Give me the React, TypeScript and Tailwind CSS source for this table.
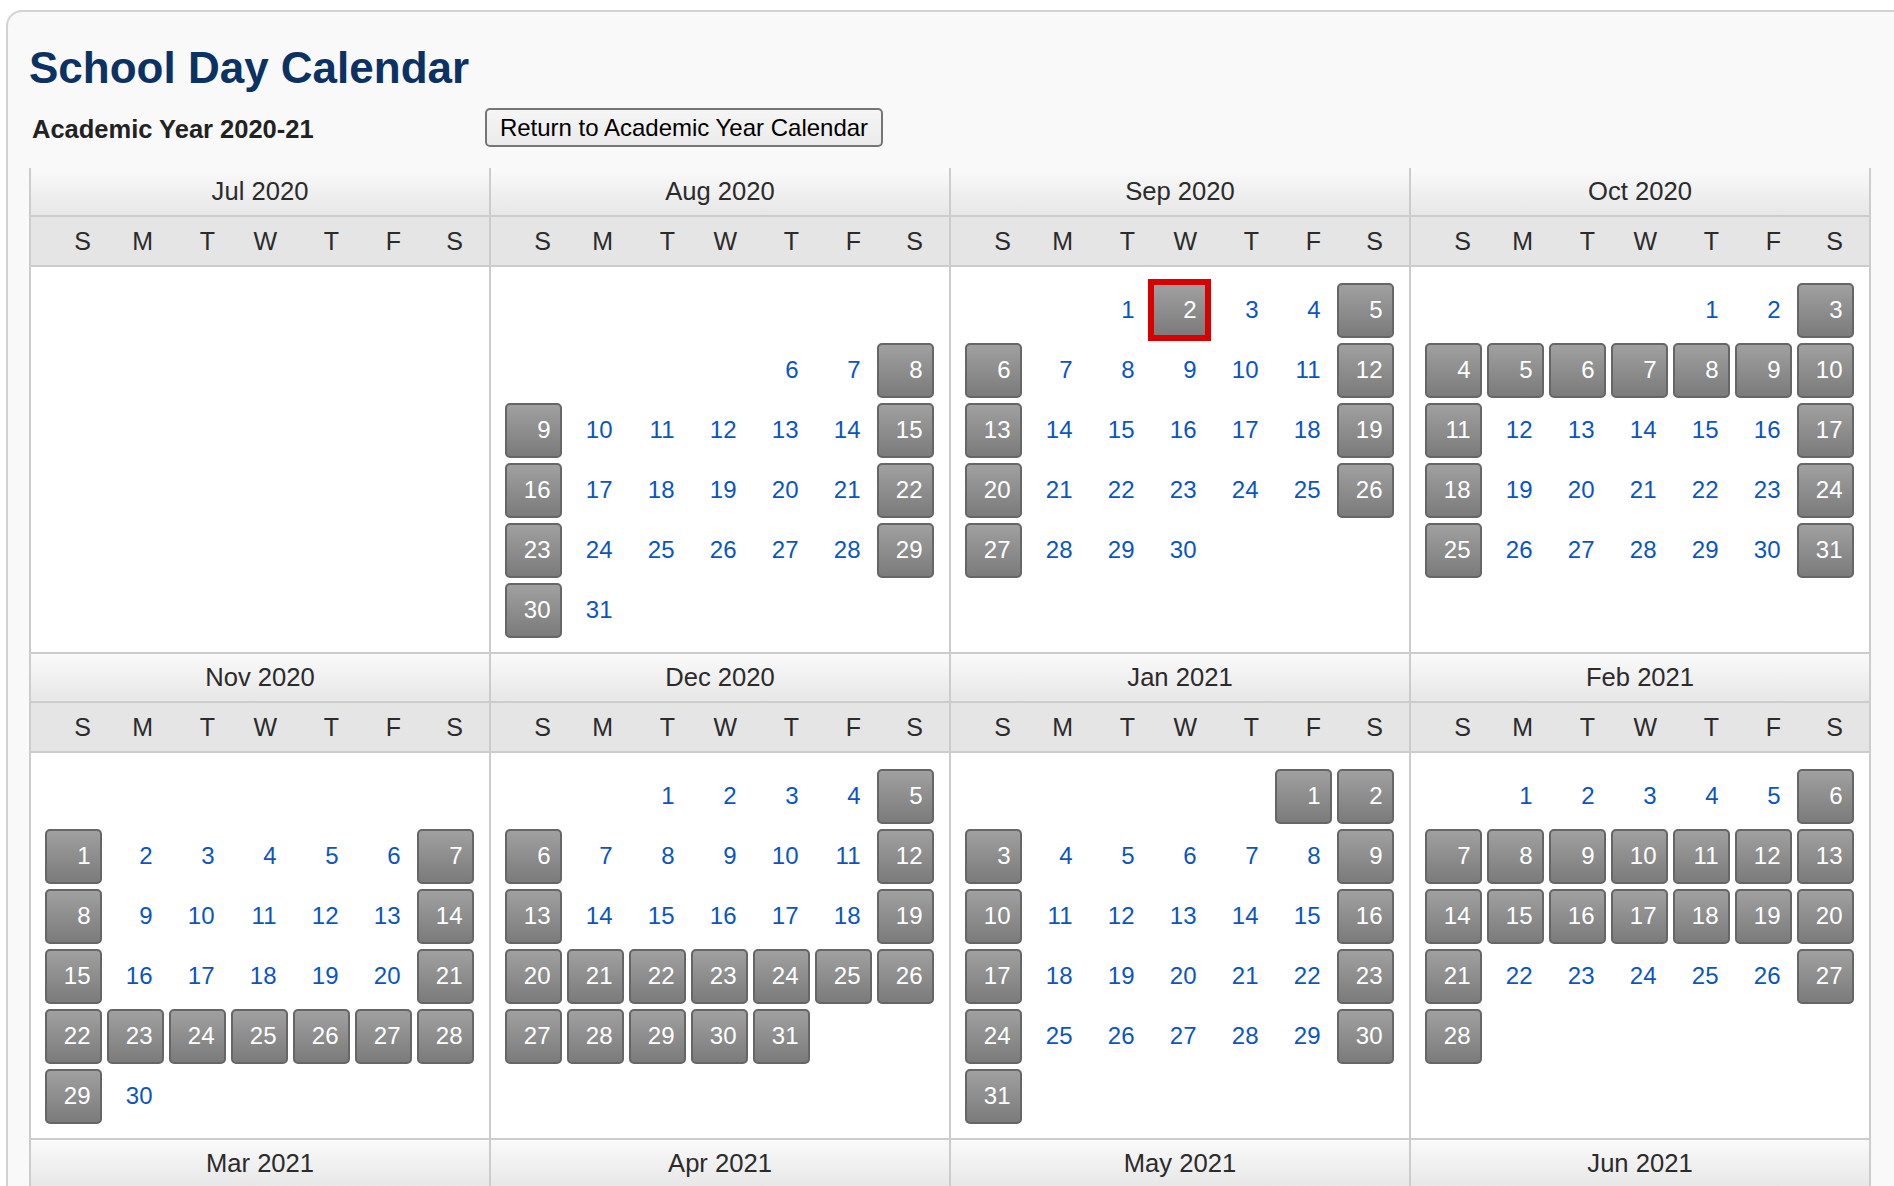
import React from 'react';

type MonthData = {
  name: string;
  y: number;
  m: number;
  start?: number;
  hideAll?: boolean;
  off: number[];
  selected?: number;
};

const MONTHS: MonthData[][] = [
  [
    { name: 'Jul 2020', y: 2020, m: 6, hideAll: true, off: [] },
    { name: 'Aug 2020', y: 2020, m: 7, start: 6, off: [] },
    { name: 'Sep 2020', y: 2020, m: 8, off: [], selected: 2 },
    { name: 'Oct 2020', y: 2020, m: 9, off: [5, 6, 7, 8, 9] },
  ],
  [
    { name: 'Nov 2020', y: 2020, m: 10, off: [23, 24, 25, 26, 27] },
    { name: 'Dec 2020', y: 2020, m: 11, off: [21, 22, 23, 24, 25, 28, 29, 30, 31] },
    { name: 'Jan 2021', y: 2021, m: 0, off: [1] },
    { name: 'Feb 2021', y: 2021, m: 1, off: [8, 9, 10, 11, 12, 15, 16, 17, 18, 19] },
  ],
];

// only the month titles of the third row fit in the window
const NEXT_ROW = ['Mar 2021', 'Apr 2021', 'May 2021', 'Jun 2021'];

const WEEKDAYS = ['S', 'M', 'T', 'W', 'T', 'F', 'S'];

function DayCell({ month, day }: { month: MonthData; day: number }) {
  const total = new Date(month.y, month.m + 1, 0).getDate();
  if (month.hideAll || day < 1 || day > total || day < (month.start ?? 1)) {
    return <div />;
  }
  const dow = new Date(month.y, month.m, day).getDay();
  const isOff = dow === 0 || dow === 6 || month.off.includes(day);

  if (month.selected === day) {
    return (
      <div className="flex items-center justify-center">
        <div className="w-[63px] h-[62px] shrink-0 border-[6px] border-[#d90000] bg-linear-to-b from-[#a0a0a0] to-[#7b7b7b] flex items-center justify-end pr-[8px] text-white">
          {day}
        </div>
      </div>
    );
  }

  return (
    <div className="flex items-center justify-center">
      {isOff ? (
        <div className="w-[57px] h-[55px] shrink-0 rounded-[5px] border-2 border-[#666666] bg-linear-to-b from-[#a0a0a0] to-[#7b7b7b] flex items-center justify-end pr-[9px] text-white">
          {day}
        </div>
      ) : (
        <div className="w-[57px] h-[55px] shrink-0 border-2 border-transparent flex items-center justify-end pr-[9px] text-[#0b55c0]">
          {day}
        </div>
      )}
    </div>
  );
}

function MonthTitle({ name }: { name: string }) {
  return (
    <div className="h-[49px] border-b-2 border-[#cccccc] bg-linear-to-b from-[#fafafa] to-[#e7e7e7] text-center text-[25.6px] leading-[47px] text-[#2b2b2b]">
      {name}
    </div>
  );
}

function Month({ month, last }: { month: MonthData; last: boolean }) {
  const first = new Date(month.y, month.m, 1).getDay();
  const offset = first === 0 ? 7 : first;
  const cells = Array.from({ length: 42 }, (_, i) => i - offset + 1);

  return (
    <div className={last ? 'w-[462px] border-x-2 border-[#cccccc]' : 'w-[460px] border-l-2 border-[#cccccc]'}>
      <MonthTitle name={month.name} />
      <div className="h-[50px] border-b-2 border-[#cccccc] bg-[#e5e5e5] pl-[11px] grid grid-cols-[repeat(7,62px)]">
        {WEEKDAYS.map((d, i) => (
          <div key={i} className="text-right pr-[13px] text-[25px] leading-[48px] text-[#2b2b2b]">
            {d}
          </div>
        ))}
      </div>
      <div className="bg-white border-b-2 border-[#cccccc] pl-[11px] pt-[13px] pb-[12px]">
        <div className="grid grid-cols-[repeat(7,62px)] auto-rows-[60px] text-[24px]">
          {cells.map((day, i) => (
            <DayCell key={i} month={month} day={day} />
          ))}
        </div>
      </div>
    </div>
  );
}

export default function App() {
  return (
    <div className="h-screen w-screen overflow-hidden bg-white font-['Liberation_Sans',Arial,sans-serif]">
      <div className="ml-[6px] mt-[10px] w-[1920px] min-h-[1300px] border-2 border-[#d2d2d2] rounded-tl-[16px] bg-[#f9f9f9] pl-[21px] pt-[34px]">
        <h1 className="text-[44px] leading-[44px] font-bold text-[#0c3263]">School Day Calendar</h1>

        <div className="mt-[18px] flex items-start">
          <div className="w-[456px] h-[39px] pl-[3px] text-[25.5px] leading-[43px] font-bold text-[#222222]">
            Academic Year 2020-21
          </div>
          <button className="w-[398px] h-[39px] rounded-[5px] border-2 border-[#767676] bg-linear-to-b from-[#f5f5f5] to-[#ebebeb] text-[24px] leading-[35px] text-black">
            Return to Academic Year Calendar
          </button>
        </div>

        <div className="mt-[21px] flex flex-col">
          {MONTHS.map((row, r) => (
            <div key={r} className="flex">
              {row.map((month, i) => (
                <Month key={month.name} month={month} last={i === row.length - 1} />
              ))}
            </div>
          ))}
          <div className="flex">
            {NEXT_ROW.map((name, i) => (
              <div
                key={name}
                className={i === NEXT_ROW.length - 1 ? 'w-[462px] border-x-2 border-[#cccccc]' : 'w-[460px] border-l-2 border-[#cccccc]'}
              >
                <MonthTitle name={name} />
              </div>
            ))}
          </div>
        </div>
      </div>
    </div>
  );
}
